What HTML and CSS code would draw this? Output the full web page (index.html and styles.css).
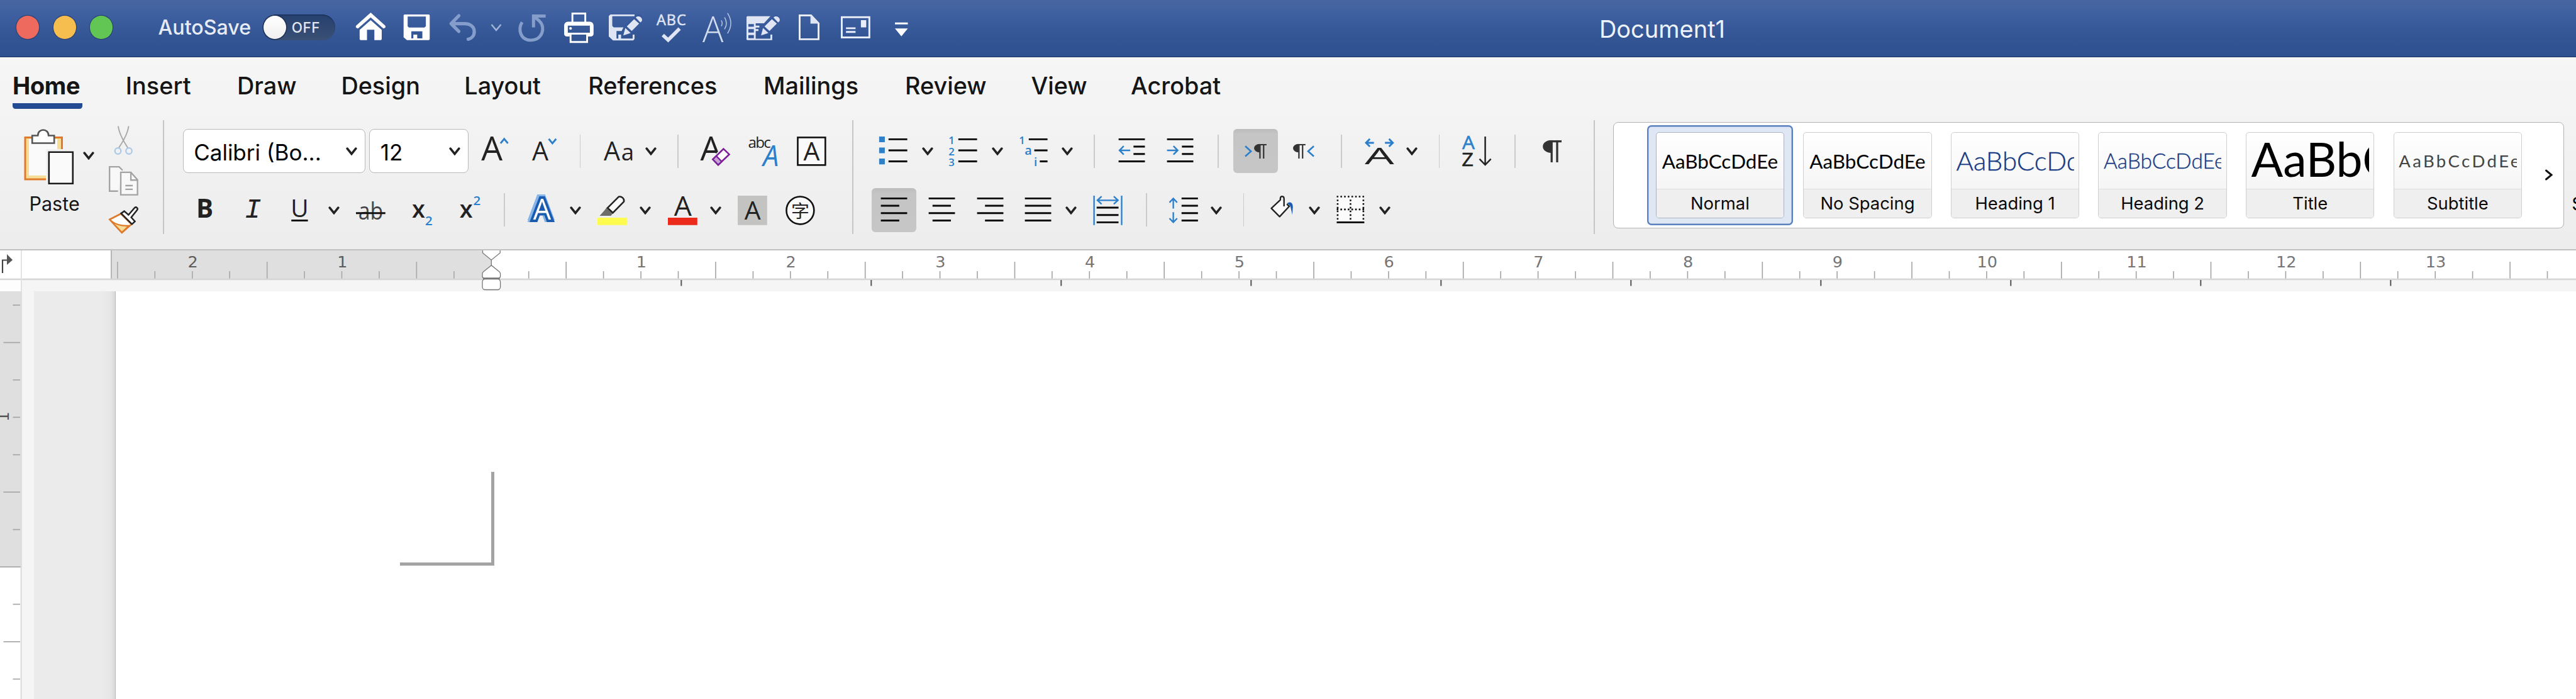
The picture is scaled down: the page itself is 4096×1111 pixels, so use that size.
FILE: index.html
```html
<!DOCTYPE html>
<html lang="en">
<head>
<meta charset="utf-8">
<title>Document1</title>
<link rel="stylesheet" href="styles.css">
</head>
<body>
<svg class="defs" aria-hidden="true">
  <symbol id="chev" viewBox="0 0 18 14"><path d="M2.2 3.2 9 11.6 15.8 3.2" fill="none" stroke="#222" stroke-width="3.6" stroke-linecap="round"/></symbol>
  <symbol id="pil" viewBox="0 0 7 8"><path d="M3.2 0A3 2.3 0 0 0 3.2 4.6Z" fill="#333"/><path d="M2.6.4H7M3.4 0V8M5.4 0V8" fill="none" stroke="#333" stroke-width=".75"/></symbol>
</svg>

<header class="titlebar">
  <span class="light red"></span><span class="light yellow"></span><span class="light green"></span>
  <span class="autosave">AutoSave</span>
  <span class="toggle"><span class="knob"></span>OFF</span>
  <svg class="ic" viewBox="0 0 16 16"><path d="M.9 7.6 8 1.3l7.1 6.3" fill="none" stroke="#fff" stroke-width="1.9" stroke-linecap="round"/><path d="M8 4.1l6 5.3v5a.6.6 0 0 1-.6.6H10V9.3H6V15H2.6a.6.6 0 0 1-.6-.6v-5z" fill="#fff"/></svg>
  <svg class="ic" viewBox="0 0 16 16"><path fill="#fff" fill-rule="evenodd" d="M1.2 1h13a.6.6 0 0 1 .6.6v12.8a.6.6 0 0 1-.6.6H2.4L.6 13.4V1.6A.6.6 0 0 1 1.2 1zM2.8 2.1v5.3l.7.7h8.4l.8-.7V2.1zM4.8 10.2V14h1.1v-2H8v2h2.8v-3.8z"/></svg>
  <svg class="ic" viewBox="0 0 16 16"><path d="M6 1.7 1.8 6 6 10.2M2 6h7.2c3.3 0 5.2 1.9 5.2 4.3 0 2.2-1.3 3.7-3.3 4.2" fill="none" stroke="#859dcb" stroke-width="1.8" stroke-linecap="round" stroke-linejoin="round"/></svg>
  <svg class="ch low" viewBox="0 0 18 14"><path d="M1.5 2 9 11 16.5 2" fill="none" stroke="#9fb2d8" stroke-width="2.6"/></svg>
  <svg class="ic" viewBox="0 0 16 16"><path d="M2.8 5.2C.3 9.2 2 15 7.6 15c6.2 0 8.200-7 4.600-10.400L9 1.900M9 8V1.900h6.600" fill="none" stroke="#859dcb" stroke-width="1.7"/></svg>
  <svg class="ic" viewBox="0 0 16 16"><g fill="none" stroke="#fff"><path d="M4.5 6V.5h7V6"/><path d="M3.5 12v4h9v-4"/></g><path fill="#fff" fill-rule="evenodd" d="M2 5h12a2 2 0 0 1 2 2v4.500A1.500 1.500 0 0 1 14.500 13H13v-1H3v1H1.500A1.500 1.500 0 0 1 0 11.500V7a2 2 0 0 1 2-2zM2 7.100v3.800h12V7.100z"/><circle cx="3.5" cy="8.6" r=".7" fill="#fff"/></svg>
  <svg class="ic wide" viewBox="0 0 18.2 16"><path fill="#dfe5f3" fill-rule="evenodd" d="M.9 1H14v1H1.900v5.300l.8.700H8l-1 2H4.200v4.100h1V12h1.500v2.100H13V12h1v2.400l-.7.700H2.300L0 13V1.900z"/><path d="M7.900 12.200 9 8 15 2c1.500-1.200 3.500.6 2.600 2.200L12 11z" fill="#37589a" stroke="#37589a" stroke-width="1.4"/><path fill="#dfe5f3" d="M9.800 7.500 13.800 3.600 16.500 6 12.500 10zM14.700 2.700c1.200-1.600 4-.1 3.300 1.900l-.8.8zM9 8.400l2.900 2.700-4 1.300z"/></svg>
  <svg class="ic" viewBox="0 0 16 16"><text x="0" y="6.9" font-size="8" textLength="16" fill="#dfe5f3" stroke="#dfe5f3" stroke-width=".2">ABC</text><path d="M3.400 12.200l2.900 2.700 6.200-6.200" fill="none" stroke="#dfe5f3" stroke-width="1.9"/></svg>
  <svg class="ic" viewBox="0 0 16 16"><text class="light-face" x="0" y="16" font-size="19.500" textLength="11.400" lengthAdjust="spacingAndGlyphs" fill="#d3dcef">A</text><path d="M10.200 4.200q1 1.600 0 3.200M12 2.600q2 3.200 0 6.400M13.600.3q3.600 5.500 0 11" fill="none" stroke="#b9c7e3" stroke-width=".5"/></svg>
  <svg class="ic wide" viewBox="0 0 18.2 16"><path fill="#dfe5f3" fill-rule="evenodd" d="M.4 2H13L9.500 5.800H5v1.300h2v1H5V9h1.500v1H5v4.200h8V12h1v3H.4L0 14.600V2.400zM1 6.200v1.500h3V6.200zM1 9v1.900h3V9zM1 12.200v1.700h3v-1.700z"/><path d="M7.900 12.200 9 8 15 2.500c1.500-1.200 3.500.6 2.600 2.200L12 11z" fill="#37589a" stroke="#37589a" stroke-width="1.200"/><path fill="#dfe5f3" d="M9.800 7.500 13.800 3.600 16.500 6 12.500 10zM14.700 2.700c1.200-1.600 4-.1 3.300 1.900l-.8.8zM9 8.400l2.900 2.700-4 1.300z"/></svg>
  <svg class="ic doc" viewBox="0 0 11.3 16"><path d="M.5 1.500h6.200l4.100 4.300v8.700H.5z" fill="none" stroke="#e9eef8"/><path d="M6.400 1.200v4.800h4.700z" fill="#dfe5f3"/></svg>
  <svg class="ic" viewBox="0 0 16 16"><rect x=".5" y="2.5" width="15" height="11" fill="none" stroke="#e9eef8"/><path d="M10.900 4.100h2.900V8h-2.900zM2.800 8H8v1H2.800zM2.800 10H8v1H2.800z" fill="#e9eef8"/></svg>
  <svg class="ic more" viewBox="0 0 7 16"><path d="M0 5.400h7v1H0zM0 8.600h7l-3.500 4.300z" fill="#fff"/></svg>
  <span class="doctitle">Document1</span>
</header>

<nav class="tabs">
  <a class="active">Home</a><a>Insert</a><a>Draw</a><a>Design</a><a>Layout</a><a>References</a><a>Mailings</a><a>Review</a><a>View</a><a>Acrobat</a>
</nav>

<section class="ribbon">
  <div class="clipboard">
    <div class="paste">
      <svg class="pasteicon" viewBox="0 0 80 90"><path d="M2 13.500h58.500V80H2z" fill="#f7dc97" stroke="#df7a2a" stroke-width="3"/><path d="M8 16h45v58H8z" fill="#fafafa"/><path d="M35 32h46v58H35z" fill="#f2f2f2"/><path d="M13.200 22.500V10.500h9c0-12 17-12 17 0h9v12z" fill="#fff" stroke="#555" stroke-width="2.600"/><path d="M39.800 36.800h38v50h-38z" fill="#fafafa" stroke="#1a1a1a" stroke-width="2.600"/></svg>
      <svg class="ch"><use href="#chev"/></svg>
      <span class="pastelabel">Paste</span>
    </div>
    <div class="cliptools">
      <svg class="scissors" viewBox="0 0 31 46"><path d="M7 .5Q8.500 14 22.300 35M23.500.5Q22 14 7.800 35" fill="none" stroke="#a6a6a6" stroke-width="1.900"/><g fill="none" stroke="#a9c8ea" stroke-width="2.200"><circle cx="6.500" cy="40" r="4.800"/><circle cx="24" cy="40" r="4.800"/></g></svg>
      <svg class="ic" viewBox="0 0 16 16"><g fill="#f8f8f8" stroke="#a3a3a3" stroke-width=".8"><path d="M5 13.600H.4V.4h5.200l1.900 1.900"/><path d="M6.500 3.400h5.500l3.600 4v8.200H6.500z"/><path d="M12 3.600v4h3.500M9 10.600h4M9 12.600h4" fill="none"/></g></svg>
      <svg class="brush" viewBox="0 0 16 15"><path d="M.5 7.100 6.600 4l5.700 5.700-5.200 4.600z" fill="#fff" stroke="#df7a2a" stroke-width=".9"/><path d="M1.200 7.900q4 3 9.700 2.600l-3.800 3.600z" fill="#f7dc97" stroke="#df7a2a" stroke-width=".7"/><path d="M6.700 3.800 8.400 2.600l2.300 2L14 .8c.9-.8 2.100.2 1.400 1.200L12.200 6l2 2.200-1.600 1.500z" fill="#fff" stroke="#222" stroke-width=".85"/></svg>
    </div>
  </div>
  <i class="gsep"></i>

  <div class="group font">
    <div class="row font1">
      <div class="combo family"><span>Calibri (Bo...</span><svg class="ch"><use href="#chev"/></svg></div>
      <div class="combo size"><span>12</span><svg class="ch"><use href="#chev"/></svg></div>
      <svg class="ic" viewBox="0 0 16 16"><text x=".4" y="13.1" font-size="18.300" textLength="11">A</text><path class="b" d="M10.900 3.700 12.900 1.300l2 2.400" stroke-width="1"/></svg>
      <svg class="ic" viewBox="0 0 16 16"><text x="1" y="13.1" font-size="14.100" textLength="9">A</text><path class="b" d="M10.100 1.300l2 2.400 2-2.400"/></svg>
      <i class="sep"></i>
      <svg class="ic" viewBox="0 0 16 16"><text x=".3" y="13.1" font-size="14.100">A</text><text x="9.800" y="13.1" font-size="12.600">a</text></svg>
      <svg class="ch"><use href="#chev"/></svg>
      <i class="sep"></i>
      <svg class="ic" viewBox="0 0 16 16"><text x=".2" y="13.1" font-size="18.300" textLength="11.200">A</text><path d="M12.800 5.300 17.600 9.600 9.900 17 5.600 12.400z" fill="#f2f2f2"/><path d="M12.800 6.700 15.900 9.700 9.900 15.400 7 12.400z" fill="#fff" stroke="#7a1f97" stroke-width=".9"/><path d="M8.900 10.600l2.900 3-1.900 1.800L7 12.400z" fill="#c9a2d6" stroke="#7a1f97" stroke-width=".8"/></svg>
      <svg class="ic" viewBox="0 0 16 16"><text x=".2" y="6.3" font-size="8.300" textLength="12.400">abc</text><text x="8.300" y="16" font-size="15.400" font-style="italic" fill="#2b7fcb" textLength="8.600" lengthAdjust="spacingAndGlyphs">A</text></svg>
      <svg class="ic" viewBox="0 0 16 16"><rect x=".5" y=".5" width="15" height="15" fill="#fafafa" stroke="#111" stroke-width=".9"/><text x="3.600" y="13" font-size="14">A</text></svg>
    </div>
    <div class="row font2">
      <svg class="ic" viewBox="0 0 16 16"><text x="3.100" y="12" font-size="13.800" font-weight="700">B</text></svg>
      <svg class="ic" viewBox="0 0 16 16"><text class="mono" x="3.400" y="12" font-size="15" font-style="italic">I</text></svg>
      <svg class="ic" viewBox="0 0 16 16"><text x="3.200" y="11.600" font-size="13.300" textLength="9.600">U</text><path d="M3.500 13.500h9" stroke="#111" stroke-width="1"/></svg>
      <svg class="ch"><use href="#chev"/></svg>
      <svg class="ic" viewBox="0 0 16 16"><text x="1.300" y="13" font-size="13" textLength="13.500" lengthAdjust="spacingAndGlyphs" fill="#444">ab</text><path d="M0 9.500h16" stroke="#111" stroke-width="1"/></svg>
      <svg class="ic" viewBox="0 0 16 16"><text x="1" y="12" font-size="13" font-weight="600">x</text><text x="8.200" y="16" font-size="7" fill="#2b7fcb" font-weight="600">2</text></svg>
      <svg class="ic" viewBox="0 0 16 16"><text x=".6" y="12" font-size="13" font-weight="600">x</text><text x="8" y="5" font-size="7" fill="#2b7fcb" font-weight="600">2</text></svg>
      <i class="sep"></i>
      <svg class="ic" viewBox="0 0 16 16"><text class="glow" x="3" y="13" font-size="15.400">A</text></svg>
      <svg class="ch"><use href="#chev"/></svg>
      <svg class="ic" viewBox="0 0 16 16"><path d="M0 12h16v4H0z" fill="#fdfb4f"/><path d="M1.200 10.900 4 7.800l1-1.400 3.500 3-1.200 1.500z" fill="#6c6c68"/><path d="M5.500 6.600 11.500.6c1.700-.4 3.200 1 2.900 2.600L8.400 9.300z" fill="#fafafa" stroke="#222" stroke-width=".85"/></svg>
      <svg class="ch"><use href="#chev"/></svg>
      <svg class="ic" viewBox="0 0 16 16"><path d="M0 12h16v4H0z" fill="#eb2a1b"/><text x="3.300" y="10.900" font-size="15.200" textLength="9.600">A</text></svg>
      <svg class="ch"><use href="#chev"/></svg>
      <svg class="ic" viewBox="0 0 16 16"><path d="M0 0h16v16H0z" fill="#c3c4c2"/><text x="3.700" y="13" font-size="14">A</text></svg>
      <svg class="ic" viewBox="0 0 16 16"><circle cx="8" cy="8" r="7.500" fill="#fafafa" stroke="#111" stroke-width=".9"/><text class="cjk" x="3.050" y="11.800" font-size="9.900">字</text></svg>
    </div>
  </div>
  <i class="gsep"></i>

  <div class="group para">
    <div class="row para1">
      <svg class="ic" viewBox="0 0 16 16"><path d="M.3 0h3.100v3.100H.3zM.3 6h3.100v3.100H.3zM.3 12h3.100v3.100H.3z" fill="#2f80c9"/><path class="k" d="M5.400 1.500h10.200M5.400 7.500h10.200M5.400 13.500h10.200"/></svg>
      <svg class="ch"><use href="#chev"/></svg>
      <svg class="ic" viewBox="0 0 16 16"><g font-size="5.700" fill="#2b7fcb" font-weight="600"><text x=".1" y="4.100">1</text><text x=".1" y="10.100">2</text><text x=".1" y="16">3</text></g><path class="k" d="M5.400 1.500h10.200M5.400 7.500h10.200M5.400 13.500h10.200"/></svg>
      <svg class="ch"><use href="#chev"/></svg>
      <svg class="ic" viewBox="0 0 16 16"><g fill="#2b7fcb" font-weight="600"><text x=".1" y="4.100" font-size="5.700">1</text><text x="3.200" y="10" font-size="6.800">a</text><text x="8.200" y="16" font-size="6.400">i</text></g><path class="k" d="M5.400 1.500h10.200M8.400 7.500h7.200M11.400 13.500h4.200"/></svg>
      <svg class="ch"><use href="#chev"/></svg>
      <i class="sep"></i>
      <svg class="ic" viewBox="0 0 16 16"><path class="k" d="M.9 1.500h14.300M9 5.500h6.200M9 9.500h6.200M.9 13.500h14.300"/><path class="b" d="M7.200 7.500H1.400M3.700 5.200 1.400 7.500 3.700 9.800" stroke-width=".85"/></svg>
      <svg class="ic" viewBox="0 0 16 16"><path class="k" d="M.9 1.500h14.300M9 5.500h6.200M9 9.500h6.200M.9 13.500h14.300"/><path class="b" d="M.9 7.500h5.800M4.400 5.200 6.700 7.500 4.400 9.800" stroke-width=".85"/></svg>
      <i class="sep"></i>
      <span class="pressed"><svg class="ic" viewBox="0 0 16 16"><path class="b" d="M2.400 5.200 5.500 8l-3.100 2.800" stroke-width=".9"/><use href="#pil" x="7" y="4" width="7" height="8"/></svg></span>
      <svg class="ic" viewBox="0 0 16 16"><path class="b" d="M13.700 5.200 10.600 8l3.100 2.800" stroke-width=".9"/><use href="#pil" x="2.200" y="4" width="7" height="8"/></svg>
      <i class="sep"></i>
      <svg class="ic" viewBox="0 0 16 16"><text x="0" y="15" font-size="12.600" textLength="16" lengthAdjust="spacingAndGlyphs">A</text><path class="b" d="M5 3.400H.7M2.800 1.300.7 3.400l2.100 2.100M11 3.400h4.300M13.200 1.300l2.100 2.100-2.100 2.100"/></svg>
      <svg class="ch"><use href="#chev"/></svg>
      <i class="sep"></i>
      <svg class="ic" viewBox="0 0 16 16"><text x="0" y="7" font-size="9.800" textLength="6.800" lengthAdjust="spacingAndGlyphs" fill="#2b7fcb" stroke="#2b7fcb" stroke-width=".2">A</text><text x="-.3" y="16" font-size="9.800" textLength="6.400" lengthAdjust="spacingAndGlyphs" stroke="#222" stroke-width=".2">Z</text><path d="M12.500 0v15.300M9.400 12.200l3.100 3.200 3.100-3.200" fill="none" stroke="#222" stroke-width=".85"/></svg>
      <i class="sep"></i>
      <svg class="ic" viewBox="0 0 16 16"><use href="#pil" x="2.500" y="2" width="10.500" height="12"/></svg>
    </div>
    <div class="row para2">
      <span class="pressed"><svg class="ic" viewBox="0 0 16 16"><path class="k" d="M.9 1.500h14.300M.9 5.500h10M.9 9.500h14.300M.9 13.500h10"/></svg></span>
      <svg class="ic" viewBox="0 0 16 16"><path class="k" d="M.9 1.500h14.300M3 5.500h10M.9 9.500h14.300M3 13.500h10"/></svg>
      <svg class="ic" viewBox="0 0 16 16"><path class="k" d="M.9 1.500h14.300M5.200 5.500h10M.9 9.500h14.300M5.200 13.500h10"/></svg>
      <svg class="ic" viewBox="0 0 16 16"><path class="k" d="M.9 1.500h14.300M.9 5.500h14.300M.9 9.500h14.300M.9 13.500h14.300"/></svg>
      <svg class="ch"><use href="#chev"/></svg>
      <svg class="ic" viewBox="0 0 16 16"><path class="b" d="M.9 0v16M15.900 0v16M2.800 2.500h11M5 .4 2.700 2.500 5 4.600M11.600.4l2.300 2.100-2.300 2.100" stroke-width=".8"/><path class="k" d="M2.300 6.500h11.900M2.300 10.500h11.900M2.300 14.500h11.900"/></svg>
      <i class="sep"></i>
      <svg class="ic" viewBox="0 0 16 16"><path class="b" d="M2.600 7V1.500M.5 3.700 2.600 1.500l2.100 2.200M2.600 9v5.500M.5 12.300l2.100 2.200 2.100-2.200" stroke-width=".8"/><path class="k" d="M7.100 1.500H16M7.100 5.500H16M7.100 9.500H16M7.100 13.500H16"/></svg>
      <svg class="ch"><use href="#chev"/></svg>
      <i class="sep"></i>
      <svg class="ic" viewBox="0 0 16 16"><path d="M6.200 2.200 1.200 6.900l4.500 4.500 5.200-5.600L8.600 3.500" fill="#fafafa"/><path d="M8.100 5.800V1.700C8.100 0 6.200 0 6.100 1.500v.8L1.200 6.900l4.500 4.500 5.200-5.600-1.300-1.200" fill="none" stroke="#222" stroke-width=".8" stroke-linejoin="round"/><path d="M9.700 4.200c1.800-1.300 3.200-.3 3.200 2l-.3 4.100-.8-3.500c-.2-1.400-1-2-2.100-2.600z" fill="#1b5cae"/></svg>
      <svg class="ch"><use href="#chev"/></svg>
      <svg class="ic" viewBox="0 0 16 16"><path d="M.5 0h15v14H.5z" fill="#fbfbfb"/><path d="M.5.5h15M.5 7.500h15M1 2.100v11.400M8 2.100v11.400M15 2.100v11.400" fill="none" stroke="#111" stroke-width=".9" stroke-dasharray=".9 1.100"/><path d="M.5 14.500h15" stroke="#000"/></svg>
      <svg class="ch"><use href="#chev"/></svg>
    </div>
  </div>
  <i class="gsep"></i>

  <div class="gallery">
    <div class="style selected"><div class="card"><div class="sample normal">AaBbCcDdEe</div><div class="name">Normal</div></div></div>
    <div class="style"><div class="card"><div class="sample normal">AaBbCcDdEe</div><div class="name">No Spacing</div></div></div>
    <div class="style"><div class="card"><div class="sample h1">AaBbCcDdEe</div><div class="name">Heading 1</div></div></div>
    <div class="style"><div class="card"><div class="sample h2">AaBbCcDdEe</div><div class="name">Heading 2</div></div></div>
    <div class="style"><div class="card"><div class="sample title">AaBbCcDdEe</div><div class="name">Title</div></div></div>
    <div class="style"><div class="card"><div class="sample subtitle">AaBbCcDdEe</div><div class="name">Subtitle</div></div></div>
    <svg class="next" viewBox="0 0 14 18"><path d="M2.500 2 11 9l-8.500 7" fill="none" stroke="#111" stroke-width="3" stroke-linecap="round"/></svg>
  </div>
  <div class="pane">Styles</div>
</section>

<svg class="hruler" id="hruler" viewBox="0 0 4096 65"></svg>

<main class="work">
  <svg class="vruler" id="vruler" viewBox="0 0 35 648"></svg>
  <div class="gutter"></div>
  <div class="desk"></div>
  <div class="page"><div class="cropmark"></div></div>
</main>
<script src="rulers.js"></script>
</body>
</html>
```
FILE: rulers.js
```javascript
(function () {
  var step = 59.44;
  var zero = 781.3;
  function rect(x, y, w, h, fill) {
    return '<rect x="' + x.toFixed(1) + '" y="' + y.toFixed(1) + '" width="' + w + '" height="' + h + '" fill="' + fill + '"/>';
  }

  // horizontal ruler: quarter-inch ticks, numbers on whole inches
  var s = rect(0, 0, 4096, 45, '#fff') + rect(177, 0, zero - 177, 45, '#dfdfdf') + rect(176, 0, 1.8, 45, '#b0b0b0');
  s += rect(0, 45, 4096, 20, '#f5f5f5') + rect(0, 45, 33, 20, '#fdfdfd') + rect(0, 44.6, 4096, 2.6, '#d6d6d6') + rect(33, 0, 1.8, 65, '#e0e0e0');
  for (var i = -10; i <= 55; i++) {
    if (i === 0) continue;
    var x = zero + i * step;
    var tall = Math.abs(i % 4) === 2;
    s += rect(x - 0.8, tall ? 18 : 33, 1.6, tall ? 26.6 : 11.6, i < 0 ? '#a8a8a8' : '#a3a3a3');
    if (i % 4 === 0) {
      s += '<text class="num" x="' + (x + 0.8).toFixed(1) + '" y="27.2" fill="' + (i < 0 ? '#5c5c5c' : '#747474') + '">' + Math.abs(i / 4) + '</text>';
    }
  }
  for (var t = 1; t <= 10; t++) s += rect(zero + t * 302 - 1, 47, 2, 9.5, '#555');
  // tab selector and indent markers
  s += '<path d="M4 36V15.500H13" fill="none" stroke="#444" stroke-width="2.200"/><path d="M11 6l9 9.200-9 7.800z" fill="#555"/>';
  s += '<g fill="#fff" stroke="#777" stroke-width="1.3"><path d="M781.3 15V24"/><path d="M767.500 0v4l13.800 11.200L795.200 4V0"/><path d="M781.3 23.700 768.500 34q-1.500 1.500-1.500 3v4q0 3 3 3h22.600q3 0 3-3v-4q0-1.500-1.500-3z"/><rect x="767" y="45.500" width="28.600" height="17" rx="4.500"/></g>';
  s += rect(768, 43.8, 26.6, 2, '#777');
  document.getElementById('hruler').innerHTML = s;

  // vertical ruler
  var top = 438;
  var v = rect(0, 0, 33, top, '#dfdfdf') + rect(0, top, 33, 210, '#fff') + rect(0, top - 1, 33, 2, '#b0b0b0');
  for (var j = -7; j <= 3; j++) {
    if (j === 0) continue;
    var y = top + j * step;
    var big = Math.abs(j % 4) === 2;
    v += rect(big ? 5.5 : 20.5, y - 0.8, big ? 26.5 : 11.5, 1.7, '#a6a6a6');
  }
  v += rect(32.6, 0, 2.2, 648, '#dcdcdc');
  v += '<text class="num" transform="translate(14 ' + (top - 4 * step - 1).toFixed(1) + ') rotate(-90)" fill="#555">1</text>';
  document.getElementById('vruler').innerHTML = v;
})();
```
FILE: styles.css
```css
* { box-sizing: border-box; }
body {
  margin: 0;
  width: 4096px;
  height: 1111px;
  overflow: hidden;
  background: linear-gradient(#f6f6f6 91px, #f1f1f1 250px, #ededed 396px);
  font-family: Inter, "Liberation Sans", sans-serif;
  color: #151515;
}
svg { display: block; overflow: visible; }
.defs { width: 0; height: 0; position: absolute; }

/* icons sit on a 16-unit grid */
.ic { width: 46.8px; height: 46.8px; fill: #222; }
.ic.wide { width: 53.2px; }
.ic.doc { width: 33px; }
.ic.more { width: 20.5px; }
.ic text { font-family: "Open Sans", "Noto Sans", sans-serif; }
.ic text.mono { font-family: "Liberation Mono", monospace; }
.ic text.cjk { font-family: "Noto Sans CJK SC", sans-serif; }
.ic text.light-face { font-weight: 300; }
.ic text.glow {
  fill: #fff;
  stroke: #1b5cae;
  stroke-width: 2.7px;
  stroke-miterlimit: 2;
  paint-order: stroke;
  filter: drop-shadow(.8px 0 0 #86b5ea) drop-shadow(-.8px 0 0 #86b5ea) drop-shadow(0 -.8px 0 #86b5ea) drop-shadow(0 .5px 0 #86b5ea);
}
.ch { width: 18px; height: 14px; }
.b { fill: none; stroke: #2b7fcb; }
.k { fill: none; stroke: #0a0a0a; stroke-width: 1; }

/* title bar */
.titlebar {
  height: 91px;
  display: grid;
  grid-template-columns: 58.4px 58.7px 108px 167.2px 147.3px 74px 72.5px 67.5px 42px 75.4px 70.3px 76.3px 73px 70.3px 83.2px 66.9px 85.6px 1120px 300px;
  align-items: center;
  justify-items: start;
  padding: 0 0 3.2px 26.4px;
  background: linear-gradient(#4865a1, #3f60a0 25%, #335594 65%, #2f5090);
  border-bottom: 1.5px solid #15305f;
}
.light { width: 35.8px; height: 36.4px; border-radius: 50%; box-shadow: 0 0 0 1.2px #2b4474; }
.light.red { background: #ee695e; }
.light.yellow { background: #f6be4f; }
.light.green { background: #62c655; }
.autosave { font-size: 32.2px; font-weight: 500; color: #e6ebf5; line-height: 40px; padding-top: 1px; }
.toggle {
  width: 114.6px;
  height: 41.6px;
  border-radius: 21px;
  display: flex;
  align-items: center;
  gap: 9px;
  font-size: 22.5px;
  font-weight: 500;
  letter-spacing: .6px;
  color: #e2e6ee;
  background: linear-gradient(#26406f, #3a5074);
  box-shadow: inset 0 1.5px 1px #1b3059;
}
.knob { width: 36px; height: 37px; border-radius: 50%; background: linear-gradient(#fff, #efefef); box-shadow: 0 0 0 1.5px #1b2f55; }
.ch.low { margin-top: 2px; }
.doctitle { font-size: 38px; line-height: 44px; color: #eef2fa; padding-top: 5px; }

/* tabs */
.tabs {
  height: 98px;
  padding-left: 20px;
  display: grid;
  grid-template-columns: 179.8px 177.2px 165.4px 195.9px 197.1px 278.6px 225px 200.5px 158.5px 160px;
  justify-items: start;
  font-size: 37.8px;
  font-weight: 500;
  line-height: 90px;
}
.tabs .active { font-weight: 700; letter-spacing: -.3px; width: 111px; height: 82px; border-bottom: 9px solid #244a91; border-radius: 0 0 4.5px 4.5px; white-space: nowrap; }

/* ribbon */
.ribbon { height: 209px; display: flex; align-items: flex-start; border-bottom: 2px solid #c1c1c1; overflow: hidden; }
.gsep { flex: none; width: 2px; height: 181.5px; margin-top: 1.6px; background: #c6c6c6; }
.clipboard { width: 258.7px; flex: none; display: flex; }
.paste { width: 173px; padding: 16px 0 0 38px; display: grid; grid-template-columns: 93.5px 18px; grid-template-rows: 90px 53px; }
.pasteicon { width: 80px; height: 90px; }
.paste .ch { margin-top: 35px; }
.pastelabel { grid-column: 1 / 3; font-size: 30.5px; line-height: 36px; margin: 11px 0 0 8.5px; }
.cliptools { display: flex; flex-direction: column; padding-top: 11px; }
.scissors { width: 31px; height: 46px; margin-left: 8px; }
.cliptools .ic { margin-top: 17.7px; }
.brush { width: 46.8px; height: 43.9px; margin-top: 17.5px; }

.group { flex: none; padding-top: 16.2px; display: grid; grid-template-rows: 70.2px 70.2px; row-gap: 23.5px; }
.row { display: grid; align-items: center; justify-items: start; }
.font { width: 1094px; padding-left: 30px; }
.font1 { grid-template-columns: 296.5px 177px 79px 78.5px 37.5px 66.7px 51.1px 36.2px 76px 77.7px 60px; }
.font2 { padding-left: 12.5px; grid-template-columns: 76px 74px 69px 44px 86px 77px 72.3px 37.6px 66.6px 44.5px 66.7px 44.7px 67px 44.2px 76.4px 50px; }
.para { width: 1177px; padding-left: 29.8px; }
.para1 { padding-left: 10.7px; grid-template-columns: 68.4px 42.9px 68.5px 43px 68px 51.5px 37px 76.5px 83px 25.5px 88px 82.9px 37.2px 66.8px 51.3px 37.5px 82.8px 37px 60px; }
.para2 { grid-template-columns: 88px 76.5px 76px 67.4px 43.1px 84.5px 36.5px 67px 51.2px 41.8px 62.8px 43px 68.7px 20px; }
.sep { width: 1.8px; height: 53px; background: #cbcbcb; }
.combo {
  height: 70.2px;
  border: 1.6px solid #b9b9b9;
  border-radius: 8px;
  background: #fff;
  display: flex;
  align-items: center;
  justify-content: space-between;
  font-size: 35px;
  color: #000;
  padding: 3px 12px 0 16.5px;
}
.combo .ch { margin-top: -3px; }
.family { width: 290px; }
.size { width: 157.5px; }
.pressed { width: 70.5px; height: 70.2px; border-radius: 6px; background: linear-gradient(#bcbcbc, #c5c5c5 12%, #c6c6c6); display: grid; place-items: center; }

/* style gallery */
.gallery {
  flex: none;
  width: 1512.5px;
  height: 169.4px;
  margin: 4.8px 0 0 29px;
  border: 1.6px solid #b3b3b3;
  border-radius: 8px;
  background: #fff;
  display: flex;
  align-items: center;
  padding-left: 53px;
}
.style { width: 234.6px; height: 158.5px; padding: 12px 14px; flex: none; display: flex; align-items: center; border-radius: 7px; }
.style.selected { width: 232.6px; margin-right: 2px; padding-right: 12px; background: #dfe7f4; box-shadow: inset 0 0 0 2.4px #5b82bf; }
.card { width: 204.4px; height: 136.2px; flex: none; border: 1.5px solid #cfcfcf; border-radius: 5px; overflow: hidden; background: linear-gradient(#fff, #f6f6f6 64%); }
.selected .card { border-color: #a9b3c4; }
.sample { height: 89px; line-height: 89px; margin: 0 7.5px; overflow: hidden; white-space: nowrap; font-family: Lato, "Open Sans", sans-serif; color: #000; }
.sample.normal { font-size: 31.4px; text-align: center; line-height: 91px; }
.sample.h1 { font-size: 42px; font-weight: 300; color: #173a85; -webkit-text-stroke: .4px #173a85; }
.sample.h2 { font-size: 33.4px; font-weight: 300; color: #173a85; -webkit-text-stroke: .4px #173a85; }
.sample.title { font-size: 75px; line-height: 83px; }
.sample.subtitle { font-size: 27.5px; letter-spacing: 3.4px; color: #444; }
.name { height: 46px; line-height: 45px; border-top: 1.5px solid #dedede; background: #efefef; text-align: center; font-size: 27.4px; color: #0a0a0a; }
.next { width: 14px; height: 18px; margin-left: 19.5px; }
.pane { font-size: 29px; line-height: 36px; margin: 117px 0 0 12px; width: 60px; color: #000; }

/* rulers and page */
.hruler { width: 4096px; height: 65px; }
.num { font-family: "DejaVu Sans", sans-serif; font-size: 25.5px; text-anchor: middle; }
.work { display: flex; height: 648px; }
.vruler { width: 35px; height: 648px; flex: none; overflow: hidden; }
.gutter { width: 18.5px; background: #f5f5f5; }
.desk { width: 129.5px; background: linear-gradient(90deg, #ebebeb 82%, #e6e6e6 94%, #d8d8d8); }
.page { flex: 1; background: #fff; border-left: 1.8px solid #bababa; }
.cropmark { width: 149.5px; height: 149.2px; margin: 287.3px 0 0 452px; border: solid #a3a3a3; border-width: 0 5.6px 5.2px 0; }
```
